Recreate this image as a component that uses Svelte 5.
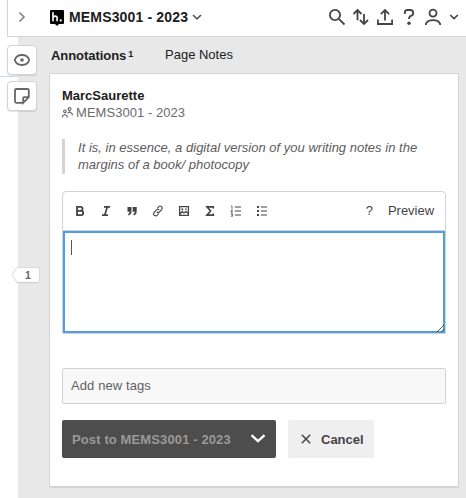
<script>
  let draft = $state('');
</script>

<div class="app">
  <header class="topbar">
    <button class="collapse" aria-label="Collapse">
      <svg width="8" height="12" viewBox="0 0 8 12"><path d="M1.5 1.5 6 6 1.5 10.5" stroke="#858585" stroke-width="1.6" /></svg>
    </button>
    <svg class="logo" width="14" height="16" viewBox="0 0 14 16">
      <path d="M1 0h12q1 0 1 1v12q0 1-1 1H9l-2 2-2-2H1q-1 0-1-1V1q0-1 1-1z" fill="#000" />
      <path d="M3 2.300v9M3 7.800q.5-1.700 2.200-1.700 1.900 0 1.900 2v3.200" stroke="#fff" stroke-width="1.600" />
      <circle cx="10.700" cy="10.400" r="1.100" fill="#fff" />
    </svg>
    <strong class="group">MEMS3001 - 2023</strong>
    <svg class="groupchev" width="10" height="8" viewBox="0 0 10 8"><path d="m1 2 4 3.800L9 2" stroke="#555" stroke-width="1.6" /></svg>
    <div class="tools">
      <svg width="18" height="18" viewBox="0 0 18 18"><circle cx="7" cy="7" r="5.100" /><path d="m10.800 10.800 5.700 5.700" /></svg>
      <svg width="18" height="18" viewBox="0 0 18 18"><path d="M5.500 12.200V2.300M1.500 6l4-4 4 4M12 6v9.700M8 12l4 4 4-4" /></svg>
      <svg width="18" height="18" viewBox="0 0 18 18"><path d="M1.900 11.500V16h14.200v-4.500M9 12.500V2.300M4.900 6.200 9 2.100l4.100 4.100" /></svg>
      <svg width="18" height="18" viewBox="0 0 18 18"><path d="M4.800 6V4.600Q4.800 2 7.300 2h3Q13.200 2 13.200 4.700T11 7.800Q9 8.400 9 11" /><circle cx="9" cy="15.200" r="1.700" fill="#444" stroke="none" /></svg>
      <svg width="18" height="18" viewBox="0 0 18 18"><circle cx="9" cy="5.200" r="3.500" /><path d="M1.900 17v-1.200q1.600-3.600 7.100-3.600t7.100 3.600V17" /></svg>
      <svg class="small" width="10" height="8" viewBox="0 0 10 8"><path d="m1.200 2 3.800 3.600L8.800 2" stroke-width="1.600" /></svg>
    </div>
  </header>

  <div class="body">
    <aside class="rail">
      <button class="side" aria-label="Show highlights">
        <svg width="18" height="16" viewBox="0 0 18 16"><path d="M1.800 8C2.800 4.600 5.400 3 9 3s6.200 1.600 7.200 5c-1 3.400-3.600 5-7.200 5S2.800 11.400 1.800 8z" /><circle cx="9" cy="8" r="1.800" fill="#666" stroke="none" /></svg>
      </button>
      <button class="side" aria-label="New page note">
        <svg width="18" height="18" viewBox="0 0 18 18"><path d="M10.200 15.800H3.200Q2 15.800 2 14.600V3.200Q2 2 3.200 2h11.200Q15.800 2 15.800 3.200v7L10.200 15.800v-4.600q0-1 1-1h4.600" /></svg>
      </button>
      <div class="bucket">
        <svg width="30" height="18" viewBox="0 0 30 18"><path d="M6 1.500h21q1.500 0 1.500 1.500v12q0 1.500-1.500 1.500H6L1 9z" fill="#fff" stroke="#dadada" /><path d="M6 16.700h21" stroke="#ccc" /></svg>
        <b>1</b>
      </div>
    </aside>

    <main>
      <nav>
        <strong>Annotations<sup>1</sup></strong>
        <span>Page Notes</span>
      </nav>
      <article>
        <h3>MarcSaurette</h3>
        <div class="meta">
          <svg width="11" height="11" viewBox="0 0 11 11"><circle cx="2.900" cy="4.300" r="1.300" /><circle cx="7.600" cy="2" r="1.400" /><path d="M.6 10.400V9l2.300-1.600L5.200 9v1.400M5.600 6.300l2-1.500 2.600 2v1.600" /></svg>
          <span>MEMS3001 - 2023</span>
        </div>
        <blockquote>It is, in essence, a digital version of you writing notes in the<br />margins of a book/ photocopy</blockquote>

        <div class="toolbar">
          <svg viewBox="0 0 12 12"><path d="M3 1.900h3.600a1.900 1.900 0 0 1 0 3.900H3zM3 5.900h4.100a2.100 2.100 0 0 1 0 4.200H3z" stroke-width="1.800" /></svg>
          <svg viewBox="0 0 12 12"><path d="M4 1.800h6M2 10.200h6M7.300 1.800 4.700 10.200" stroke-width="1.700" /></svg>
          <svg viewBox="0 0 12 12"><path d="M1.500 2h4v4.500q0 3-3.200 4V8.700q1.300-.5 1.300-2H1.500zM6.700 2h4v4.500q0 3-3.200 4V8.700q1.300-.5 1.300-2H6.700z" fill="#444" stroke="none" /></svg>
          <svg viewBox="0 0 12 12"><path d="m5.300 3.300 1.500-1.700q1.300-1.200 2.700 0t0 3L7.300 7Q6 8.200 4.700 7M6.700 8.500 5.200 10.300q-1.300 1.200-2.900 0t0-3L4.600 4.800Q6 3.600 7.300 4.800" stroke-width="1.1" /></svg>
          <svg viewBox="0 0 12 12"><path d="M1.600 1.600h8.800v8.800H1.600zM2 9l2.200-2.500L6 8l2-1.600 2 2.200" stroke-width="1.300" /><circle cx="4.300" cy="4.300" r="1" fill="#444" stroke="none" /><path d="M7 4.200h1.500" stroke-width="1.200" /></svg>
          <svg viewBox="0 0 12 12"><path d="M9.300 3.500V1.900H3L6.500 6 3 10.100h6.300V8.500" stroke-width="1.700" /></svg>
          <svg viewBox="0 0 12 12"><path d="M4.800 2H11M4.800 6H11M4.800 10H11" stroke-width="1.100" /><path d="M1 1h1v3M.8 5.200h1.600v1H1v1h1.600M.8 8.700h1.700v2.600H.8M1 10h1.500" stroke-width=".7" /></svg>
          <svg viewBox="0 0 12 12"><path d="M4.800 2H11M4.800 6H11M4.800 10H11" stroke-width="1.200" /><path d="M1 2h2M1 6h2M1 10h2" stroke-width="2" /></svg>
          <span class="help">?</span>
          <span class="preview">Preview</span>
        </div>
        <div class="editor">
          <textarea bind:value={draft} aria-label="Annotation"></textarea>
          <i class="caret"></i>
          <svg class="grip" width="8" height="8" viewBox="0 0 8 8"><path d="M1 8 8 1M5 8l3-3" stroke="#444" stroke-width=".9" /></svg>
        </div>

        <div class="tags">Add new tags</div>
        <div class="actions">
          <button class="post"><span>Post to MEMS3001 - 2023</span>
            <svg width="16" height="11" viewBox="0 0 16 11"><path d="m1.500 1.200 6.500 6L14.500 1.200" stroke="#fff" stroke-width="2.300" /></svg>
          </button>
          <button class="cancel">
            <svg width="10" height="10" viewBox="0 0 10 10"><path d="m.8.800 8.400 8.400M9.200.800.800 9.200" stroke="#444" stroke-width="1.500" /></svg>
            <span>Cancel</span>
          </button>
        </div>
      </article>
    </main>
  </div>
</div>

<style>
  :global(body) { margin: 0; background: #fff; }
  .app, .app * { box-sizing: border-box; }
  .app {
    width: 466px; height: 498px; overflow: hidden;
    display: flex; flex-direction: column;
    font: 13px/15px "Liberation Sans", Arial, sans-serif; color: #202020;
    background: #fff;
  }
  svg { display: block; fill: none; flex: none; }
  button { font: inherit; border: 0; padding: 0; margin: 0; background: none; }

  .topbar {
    height: 37px; margin-left: 7px; flex: none;
    border-left: 1px solid #d3d3d3; border-bottom: 1px solid #d3d3d3;
    display: flex; align-items: center; padding-bottom: 2px; background: #fff;
  }
  .collapse { width: 8px; margin: 0 24px 0 10px; }
  .logo { margin: 1px 0 0 0; }
  .group { font-size: 14px; letter-spacing: .16px; margin-left: 5px; white-space: nowrap; }
  .groupchev { margin-left: 4px; }
  .tools { margin-left: auto; display: flex; align-items: center; gap: 6px; padding-right: 7px; }
  .tools svg { stroke: #444; stroke-width: 1.800; }
  .tools .small { margin-left: 1px; }

  .body {
    flex: 1; display: flex; min-height: 0;
    background: linear-gradient(90deg, #fff 18px, #e8e8e8 18px);
  }
  .rail {
    width: 49px; flex: none; padding: 8px 0 0 7px;
    background: linear-gradient(#c9d9e6, #c9d9e6) 0 39px / 18px 1px no-repeat;
  }
  .side {
    display: flex; align-items: center; justify-content: center;
    width: 30px; height: 30px; margin-bottom: 6px; background: #fff;
    border: 1px solid #d3d3d3; border-radius: 4px; box-shadow: 0 1px 1px rgba(0,0,0,.12);
  }
  .side svg { stroke: #666; stroke-width: 1.800; }
  .bucket { display: grid; width: 30px; margin: 155px 0 0 4px; align-items: center; justify-items: center; }
  .bucket > * { grid-area: 1 / 1; }
  .bucket b { font-size: 10.5px; line-height: 14px; color: #666; padding-left: 4px; }

  main { width: 410px; flex: none; }
  nav { height: 36px; display: flex; padding: 10px 0 0 2px; white-space: nowrap; }
  nav strong { width: 114px; padding-top: 1px; letter-spacing: -.05px; }
  sup { font-size: 9px; line-height: 0; margin-left: 2px; vertical-align: 3px; }
  article {
    height: 415px; background: #fff; border: 1px solid #d3d3d3; border-bottom-width: 2px;
    border-radius: 2px; padding: 14px 12px 0;
  }
  h3 { margin: 0; font-size: 13px; line-height: 15px; }
  .meta { display: flex; align-items: center; gap: 3px; margin-top: 2px; color: #6b6b6b; letter-spacing: .05px; }
  .meta svg { stroke: #666; stroke-width: 1.1; }
  blockquote {
    margin: 19px 0 17px; padding: 0 0 0 13px; height: 35px; border-left: 3px solid #d3d3d3;
    font-style: italic; line-height: 17px; color: #5c5c5c; white-space: nowrap; letter-spacing: .015px;
  }
  .toolbar {
    height: 40px; display: flex; align-items: center; gap: 14px; padding: 0 11px 1px;
    border: 1px solid #d3d3d3; border-radius: 4px 4px 0 0; color: #444;
  }
  .toolbar svg { width: 12px; height: 12px; stroke: #444; }
  .help { margin-left: auto; margin-right: 1px; font-size: 13px; }
  .preview { letter-spacing: -.03px; }
  .editor {
    position: relative; height: 103px;
    border: 1px solid #d3d3d3; border-top: 0; border-radius: 0 0 2px 2px;
  }
  textarea {
    display: block; width: 100%; height: 100%; resize: none; outline: 0;
    border: 2px solid #4f9de3; background: #fff;
  }
  .caret { position: absolute; left: 8px; top: 9px; width: 1px; height: 15px; background: #555; }
  .grip { position: absolute; right: 1px; bottom: 1px; }
  .tags {
    height: 36px; margin-top: 34px; padding: 9px 8px; border: 1px solid #d3d3d3;
    border-radius: 2px; background: #f8f8f8; color: #606060; letter-spacing: .1px;
  }
  .actions { display: flex; gap: 12px; margin-top: 16px; }
  .actions button { height: 38px; display: flex; align-items: center; font-weight: bold; border-radius: 2px; white-space: nowrap; }
  .post { width: 214px; padding: 0 10px; background: #4d4d4d; color: #999; justify-content: space-between; letter-spacing: .12px; }
  .cancel { width: 86px; padding-left: 13px; gap: 10px; background: #efefef; color: #444; }
</style>
